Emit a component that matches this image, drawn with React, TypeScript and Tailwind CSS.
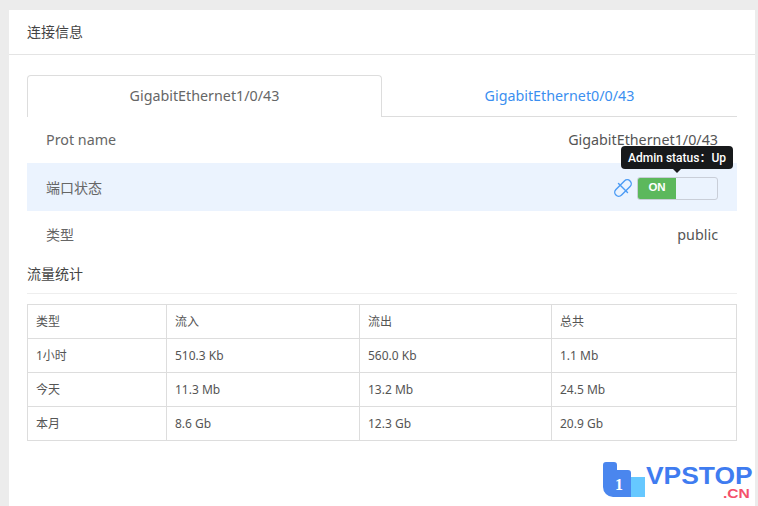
const rows = [
  ['类型', '流入', '流出', '总共'],
  ['1小时', '510.3 Kb', '560.0 Kb', '1.1 Mb'],
  ['今天', '11.3 Mb', '13.2 Mb', '24.5 Mb'],
  ['本月', '8.6 Gb', '12.3 Gb', '20.9 Gb'],
];

function Logo() {
  return (
    <div className="absolute left-[603px] top-[462px] flex w-[150px]">
      <svg width="43" height="37" viewBox="0 0 43 37" className="shrink-0">
        <rect x="27" y="15" width="15" height="20" fill="#66c8ff" />
        <path d="M0 3a3 3 0 0 1 3-3h8a3 3 0 0 1 3 3v5h11a3 3 0 0 1 3 3v24H10a10 10 0 0 1-10-10z" fill="#4a86ee" />
        <text x="16" y="28" textAnchor="middle" fontSize="16" fontWeight="700" fill="#fff" fontFamily="Liberation Serif, serif">1</text>
      </svg>
      <div className="flex flex-col pt-[2px] font-['Liberation_Sans',sans-serif] font-bold">
        <span className="origin-left scale-x-[1.1] text-[24px] leading-[24px] text-[#3f7cf0]">VPSTOP</span>
        <span className="ml-[77px] origin-left scale-x-[1.3] text-[12px] leading-[12px] text-[#f4506a]">.CN</span>
      </div>
    </div>
  );
}

export default function App() {
  return (
    <div className="relative h-[506px] w-[758px] overflow-hidden bg-[#ececec] pt-[10px] pr-[3px] pl-[9px] font-['Noto_Sans','Noto_Sans_CJK_SC',sans-serif] text-[#515a6e]">
      <div className="h-[496px] bg-white">
        {/* шапка */}
        <div className="flex h-[45px] items-center border-b border-[#e4e4e4] px-[18px] pb-[2px] text-[14px] text-[#444]">连接信息</div>

        <div className="px-[18px] pt-[20px]">
          {/* табы */}
          <div className="flex h-[42px] w-[710px] border-b border-[#dddddd] text-[14.3px]">
            <div className="flex h-[42px] w-[355px] items-center justify-center rounded-t-[4px] border border-b-0 border-[#dddddd] bg-white pb-[1px] text-[#666]">GigabitEthernet1/0/43</div>
            <div className="flex flex-1 items-center justify-center pt-[1px] text-[#3b8ff0]">GigabitEthernet0/0/43</div>
          </div>

          <div className="flex h-[46px] w-[710px] items-center justify-between px-[19px] pb-[1px] text-[14.3px]">
            <span className="text-[#666]">Prot name</span>
            <span className="text-[#555]">GigabitEthernet1/0/43</span>
          </div>

          <div className="relative flex h-[48px] w-[710px] items-center justify-between bg-[#ebf3fe] px-[19px] text-[14px]">
            <span className="pt-[1px] text-[#666]">端口状态</span>
            <div className="flex items-center gap-[5px] pt-[2px]">
              <svg width="18" height="18" viewBox="0 0 18 18" fill="none" stroke="#4b9bf5" strokeWidth="1.4" strokeLinecap="round">
                <rect x="-1" y="5" width="20" height="8" rx="4" transform="rotate(-45 9 9)" />
                <path d="M4.5 4.5 13.5 13.5" />
              </svg>
              <div className="flex h-[23px] w-[81px] overflow-hidden rounded-[3px] border border-[#c9ced8] bg-[#ebf3fe]">
                <div className="flex w-[38px] items-center justify-center bg-[#5cb85c] text-[11.5px] font-bold text-white font-['Liberation_Sans',sans-serif]">ON</div>
              </div>
            </div>
            {/* тултип */}
            <div className="absolute top-[-17px] right-[4px] flex h-[23px] w-[112px] items-center justify-center rounded-[4px] bg-[#17191b] font-['Roboto','Noto_Sans_CJK_SC',sans-serif] text-[12px] font-medium whitespace-nowrap text-white">
              Admin status：Up
              <div className="absolute bottom-[-4px] left-1/2 size-0 -translate-x-1/2 border-x-[5px] border-t-[5px] border-x-transparent border-t-[#17191b]" />
            </div>
          </div>

          <div className="flex h-[47px] w-[710px] items-center justify-between px-[19px] text-[14.3px]">
            <span className="text-[14px] text-[#666]">类型</span>
            <span className="text-[#555]">public</span>
          </div>

          {/* статистика */}
          <div className="flex h-[36px] w-[710px] items-center border-b border-[#eeeeee] pb-[5px] text-[14px] text-[#444]">流量统计</div>

          <table className="mt-[10px] w-[709px] table-fixed border-collapse text-[12px] text-[#555]">
            <colgroup>
              <col className="w-[139px]" />
              <col className="w-[193px]" />
              <col className="w-[192px]" />
              <col className="w-[185px]" />
            </colgroup>
            <tbody>
              {rows.map(r => (
                <tr key={r[0]} className="h-[34px]">
                  {r.map(c => (
                    <td key={c} className="border border-[#dddddd] px-[8px] py-0">{c}</td>
                  ))}
                </tr>
              ))}
            </tbody>
          </table>
        </div>
      </div>
      <Logo />
    </div>
  );
}
